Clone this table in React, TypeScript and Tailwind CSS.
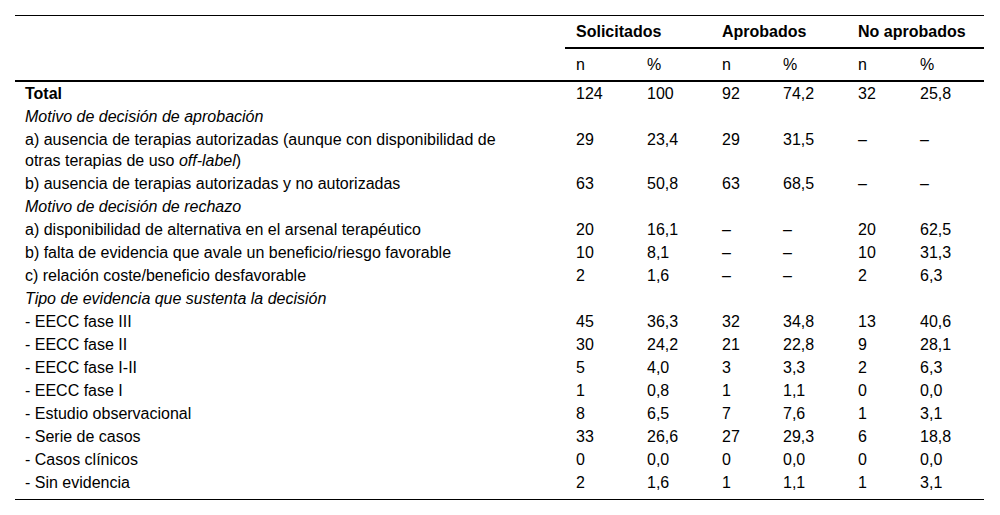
const rows: { label: React.ReactNode; kind?: "bold" | "italic"; vals?: string[]; last?: boolean }[] = [
  { label: "Total", kind: "bold", vals: ["124", "100", "92", "74,2", "32", "25,8"] },
  { label: "Motivo de decisión de aprobación", kind: "italic" },
  {
    label: (
      <>
        a) ausencia de terapias autorizadas (aunque con disponibilidad de otras terapias de uso <i>off-label</i>)
      </>
    ),
    vals: ["29", "23,4", "29", "31,5", "–", "–"],
  },
  { label: "b) ausencia de terapias autorizadas y no autorizadas", vals: ["63", "50,8", "63", "68,5", "–", "–"] },
  { label: "Motivo de decisión de rechazo", kind: "italic" },
  { label: "a) disponibilidad de alternativa en el arsenal terapéutico", vals: ["20", "16,1", "–", "–", "20", "62,5"] },
  { label: "b) falta de evidencia que avale un beneficio/riesgo favorable", vals: ["10", "8,1", "–", "–", "10", "31,3"] },
  { label: "c) relación coste/beneficio desfavorable", vals: ["2", "1,6", "–", "–", "2", "6,3"] },
  { label: "Tipo de evidencia que sustenta la decisión", kind: "italic" },
  { label: "- EECC fase III", vals: ["45", "36,3", "32", "34,8", "13", "40,6"] },
  { label: "- EECC fase II", vals: ["30", "24,2", "21", "22,8", "9", "28,1"] },
  { label: "- EECC fase I-II", vals: ["5", "4,0", "3", "3,3", "2", "6,3"] },
  { label: "- EECC fase I", vals: ["1", "0,8", "1", "1,1", "0", "0,0"] },
  { label: "- Estudio observacional", vals: ["8", "6,5", "7", "7,6", "1", "3,1"] },
  { label: "- Serie de casos", vals: ["33", "26,6", "27", "29,3", "6", "18,8"] },
  { label: "- Casos clínicos", vals: ["0", "0,0", "0", "0,0", "0", "0,0"] },
  { label: "- Sin evidencia", vals: ["2", "1,6", "1", "1,1", "1", "3,1"], last: true },
];

export default function App() {
  return (
    <div className="min-h-[515px] w-[1000px] bg-white px-[15px] pt-[15px] text-black font-['Liberation_Sans',Arial,sans-serif] text-[16px]">
      <table className="w-[969px] table-fixed border-collapse">
        <colgroup>
          <col className="w-[550px]" />
          <col className="w-[71px]" />
          <col className="w-[75px]" />
          <col className="w-[61px]" />
          <col className="w-[75px]" />
          <col className="w-[62px]" />
          <col className="w-[75px]" />
        </colgroup>
        <thead>
          <tr className="h-[32px] border-t border-black">
            <th />
            <th colSpan={2} className="border-b-2 border-black pl-[11px] pt-[2px] text-left font-bold align-middle">Solicitados</th>
            <th colSpan={2} className="border-b-2 border-black pl-[11px] pt-[2px] text-left font-bold align-middle">Aprobados</th>
            <th colSpan={2} className="border-b-2 border-black pl-[11px] pt-[2px] text-left font-bold align-middle">No aprobados</th>
          </tr>
          <tr className="h-[33px] border-b-2 border-black">
            <th />
            {["n", "%", "n", "%", "n", "%"].map((h, i) => (
              <th key={i} className="pl-[11px] pt-[2px] text-left font-normal align-middle">{h}</th>
            ))}
          </tr>
        </thead>
        <tbody>
          {rows.map((r, i) => (
            <tr key={i} className={r.last ? "border-b border-black" : ""}>
              <td
                className={`pl-[10px] pr-[40px] leading-[21px] align-top pt-px ${r.last ? "pb-[6px]" : "pb-px"} ${
                  r.kind === "bold" ? "font-bold" : r.kind === "italic" ? "italic" : ""
                }`}
              >
                {r.label}
              </td>
              {(r.vals ?? ["", "", "", "", "", ""]).map((v, j) => (
                <td key={j} className={`pl-[11px] leading-[21px] align-top pt-px ${r.last ? "pb-[6px]" : "pb-px"}`}>
                  {v}
                </td>
              ))}
            </tr>
          ))}
        </tbody>
      </table>
    </div>
  );
}
